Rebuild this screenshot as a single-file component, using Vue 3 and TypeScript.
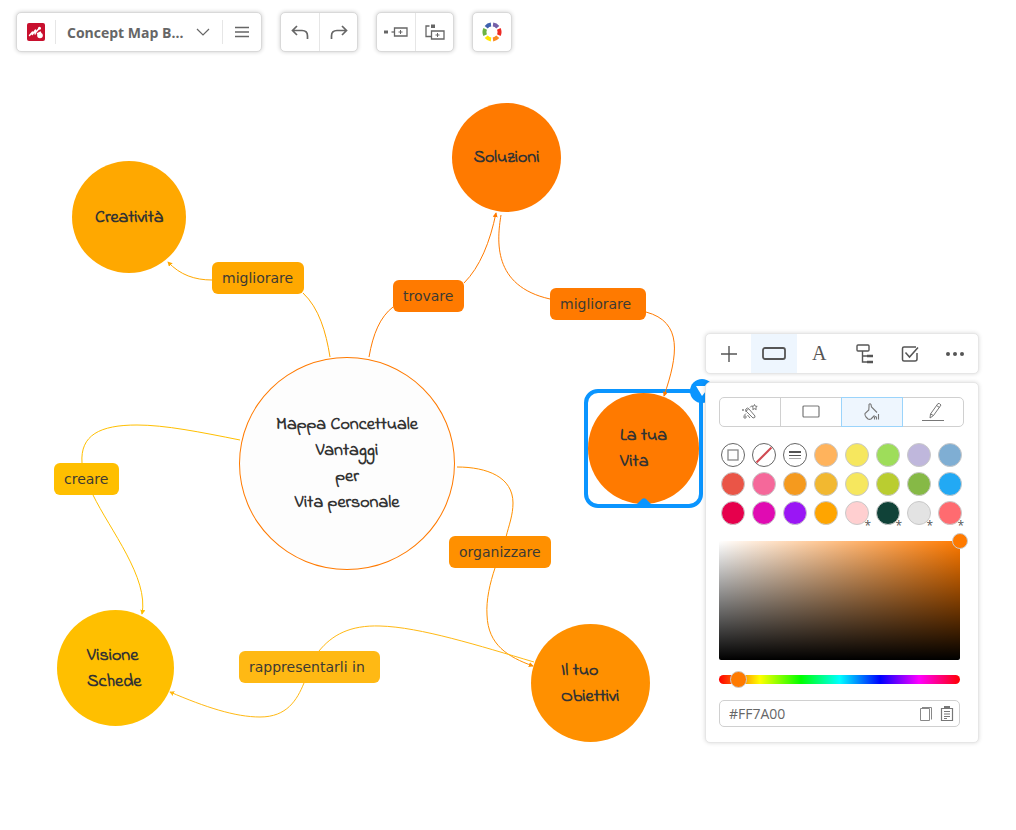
<script setup lang="ts">
import { ref } from 'vue'

interface MapNode {
  id: string
  lines: string[]
  x: number
  y: number
  w: number
  h: number
  color: string
  pad?: number
}

interface LinkLabel {
  text: string
  x: number
  y: number
  w: number
  color: string
}

interface Edge {
  d: string
  color: string
  arrow: boolean
}

const nodes: MapNode[] = [
  { id: 'soluzioni', lines: ['Soluzioni'], x: 452, y: 103, w: 109, h: 109, color: '#ff7a00' },
  { id: 'creativita', lines: ['Creatività'], x: 72, y: 161, w: 114, h: 112, color: '#ffa800' },
  { id: 'visione', lines: ['Visione', 'Schede'], x: 57, y: 610, w: 117, h: 116, color: '#ffbf00', pad: 30 },
  { id: 'obiettivi', lines: ['Il tuo', 'Obiettivi'], x: 531, y: 624, w: 119, h: 118, color: '#ff9000', pad: 30 },
  { id: 'vita', lines: ['La tua', 'Vita'], x: 588, y: 393, w: 111, h: 111, color: '#ff7a00', pad: 32 },
]

const labels: LinkLabel[] = [
  { text: 'migliorare', x: 212, y: 262, w: 92, color: '#ffa800' },
  { text: 'trovare', x: 393, y: 280, w: 71, color: '#ff7a00' },
  { text: 'migliorare', x: 550, y: 288, w: 96, color: '#ff7a00' },
  { text: 'creare', x: 54, y: 463, w: 65, color: '#ffbf00' },
  { text: 'organizzare', x: 449, y: 536, w: 102, color: '#ff9000' },
  { text: 'rappresentarli in', x: 239, y: 651, w: 141, color: '#ffb914' },
]

const edges: Edge[] = [
  { d: 'M330 357 C326 332 319 308 303 293', color: '#ffa800', arrow: false },
  { d: 'M212 280 C195 280 180 275 168 262', color: '#ffa800', arrow: true },
  { d: 'M369 357 C373 334 380 317 393 307', color: '#ff7a00', arrow: false },
  { d: 'M464 283 C480 267 490 242 496 213', color: '#ff7a00', arrow: true },
  { d: 'M501 215 C497 240 492 286 550 299', color: '#ff7a00', arrow: false },
  { d: 'M646 312 C683 322 678 355 664 396', color: '#ff7a00', arrow: true },
  { d: 'M240 440 C200 432 165 425 137 425 C100 425 80 435 82 463', color: '#ffbf00', arrow: false },
  { d: 'M93 495 C110 530 149 578 142 614', color: '#ffbf00', arrow: true },
  { d: 'M457 467 C487 467 513 477 513 503 C513 515 509 525 506 537', color: '#ff9000', arrow: false },
  { d: 'M495 568 C490 583 486 600 487 615 C488 645 508 657 533 666', color: '#ff9000', arrow: true },
  { d: 'M534 662 C480 646 420 627 380 626 C350 625 332 635 319 651', color: '#ffb914', arrow: false },
  { d: 'M304 683 C297 700 287 717 260 717 C235 717 205 707 170 692', color: '#ffb914', arrow: true },
]

interface Swatch {
  color: string
  custom?: boolean
}

const swatches: Swatch[] = [
  { color: '#ffb35c' }, { color: '#f6e75e' }, { color: '#9edd5a' }, { color: '#bfb7dc' }, { color: '#7faed3' },
  { color: '#ea5547' }, { color: '#f5689a' }, { color: '#f59a1e' }, { color: '#f2b830' },
  { color: '#f6e75e' }, { color: '#bacd30' }, { color: '#86b946' }, { color: '#22a9f4' },
  { color: '#e6004c' }, { color: '#e00bb2' }, { color: '#9a16f5' }, { color: '#ffa500' },
  { color: '#ffcfd0', custom: true }, { color: '#104238', custom: true },
  { color: '#e3e3e3', custom: true }, { color: '#ff6b70', custom: true },
]

const selected = ref('vita')
const hex = ref('#FF7A00')
const hue = ref(17)
</script>

<template>
  <main class="workspace">
    <section class="canvas" aria-label="Concept map">
      <div class="root-node">
        <span>Mappa Concettuale</span>
        <span>Vantaggi</span>
        <span>per</span>
        <span>Vita personale</span>
      </div>
      <div
        v-for="n in nodes"
        :key="n.id"
        class="node"
        :class="{ left: n.pad, selected: n.id === selected }"
        :style="{ left: n.x + 'px', top: n.y + 'px', width: n.w + 'px', height: n.h + 'px', background: n.color, paddingLeft: (n.pad ?? 0) + 'px' }"
        @click="selected = n.id"
      >
        <span v-for="line in n.lines" :key="line">{{ line }}</span>
        <template v-if="n.id === selected">
          <i class="frame"></i>
          <svg class="handle" width="24" height="24" viewBox="0 0 24 24" aria-hidden="true">
            <circle cx="12" cy="12" r="12" fill="#0a95ff" />
            <path d="M6 7h14l-8 10z" fill="#fff" />
          </svg>
          <svg class="notch" width="14" height="6" viewBox="0 0 14 6" aria-hidden="true">
            <path d="M0 6 5 1q2-1.500 4 0l5 5z" fill="#0a95ff" />
          </svg>
        </template>
      </div>
      <svg class="edges" aria-hidden="true">
        <defs>
          <marker id="tip" viewBox="0 0 6 6" refX="5" refY="3" markerWidth="5" markerHeight="5" orient="auto">
            <path d="M0 0 6 3 0 6z" fill="context-stroke" />
          </marker>
        </defs>
        <path
          v-for="e in edges"
          :key="e.d"
          :d="e.d"
          :stroke="e.color"
          fill="none"
          :marker-end="e.arrow ? 'url(#tip)' : undefined"
        />
      </svg>
      <div
        v-for="l in labels"
        :key="l.text + l.x"
        class="link-label"
        :style="{ left: l.x + 'px', top: l.y + 'px', width: l.w + 'px', background: l.color }"
      >{{ l.text }}</div>
    </section>

    <header class="topbar">
      <div class="group">
        <button class="logo" aria-label="Home">
          <svg width="18" height="18" viewBox="0 0 18 18">
            <rect width="18" height="18" rx="2" fill="#c8102e" />
            <path d="M2.500 12.500 5.500 9l-.2 2.500L8.500 7l-.4 4" fill="none" stroke="#fff" stroke-width="1.500" stroke-linecap="round" stroke-linejoin="round" />
            <path d="M8.500 9.500 12.500 5" stroke="#fff" stroke-width="1.600" stroke-linecap="round" />
            <circle cx="12.500" cy="5.200" r="1.500" fill="#fff" />
            <circle cx="13" cy="12.500" r="2.800" fill="#fff" />
            <path d="M10 11 14 9" stroke="#fff" stroke-width="1.800" />
          </svg>
        </button>
        <button class="title">
          <span>Concept Map B...</span>
          <svg width="14" height="8" viewBox="0 0 14 8" fill="none" stroke="#666" stroke-width="1.200"><path d="M1 1l6 6 6-6" /></svg>
        </button>
        <button class="menu" aria-label="Menu">
          <svg width="14" height="12" viewBox="0 0 14 12" stroke="#666" stroke-width="1.300"><path d="M0 1.500h14M0 6h14M0 10.500h14" /></svg>
        </button>
      </div>
      <div class="group">
        <button class="tool" aria-label="Undo">
          <svg width="18" height="16" viewBox="0 0 18 16" fill="none" stroke="#666" stroke-width="1.700"><path d="M6 2 1.500 6.500 6 11M1.500 6.500H11q5.500 0 5.500 5.500v3" /></svg>
        </button>
        <button class="tool" aria-label="Redo">
          <svg width="18" height="16" viewBox="0 0 18 16" fill="none" stroke="#666" stroke-width="1.700"><path d="M12 2l4.500 4.500L12 11M16.500 6.500H7q-5.500 0-5.500 5.500v3" /></svg>
        </button>
      </div>
      <div class="group">
        <button class="tool" aria-label="Add child topic">
          <svg width="24" height="16" viewBox="0 0 24 16" fill="none" stroke="#666"><path d="M0 6.500h4v3H0z" fill="#666" stroke="none" /><path d="M7.500 8h3" stroke-width="1.300" /><path d="M10.500 4h12.500v8H10.500z" stroke-width="1.300" /><path d="M16.500 6v4M14.500 8h4" /></svg>
        </button>
        <button class="tool" aria-label="Add sibling topic">
          <svg width="20" height="16" viewBox="0 0 20 16" fill="none" stroke="#666"><path d="M6 .5h4v3.500H6z" fill="#666" stroke="none" /><path d="M4.500 2H1v10.500h5" stroke-width="1.300" /><path d="M6.500 7h12.500v8H6.500z" stroke-width="1.300" /><path d="M12.500 9v4M10.500 11h4" /></svg>
        </button>
      </div>
      <div class="group">
        <button class="tool" aria-label="Theme colors">
          <svg width="20" height="20" viewBox="0 0 20 20" fill="none" stroke-width="4">
            <path d="M4.200 5.200A7.500 7.500 0 0 1 9 2.600" stroke="#3f62ae" />
            <path d="M11 2.600A7.500 7.500 0 0 1 15.800 5.200" stroke="#7560a8" />
            <path d="M16.800 6.800A7.500 7.500 0 0 1 16.800 13.200" stroke="#ed2a24" />
            <path d="M15.800 14.800A7.500 7.500 0 0 1 11 17.400" stroke="#f98b25" />
            <path d="M9 17.400A7.500 7.500 0 0 1 4.200 14.800" stroke="#ffe600" />
            <path d="M3.200 13.200A7.500 7.500 0 0 1 3.200 6.800" stroke="#6db344" />
          </svg>
        </button>
      </div>
    </header>

    <aside class="inspector" aria-label="Format">
      <div class="card actions">
        <button aria-label="Add"><svg width="16" height="16" viewBox="0 0 16 16" stroke="#555" stroke-width="1.400"><path d="M8 0v16M0 8h16" /></svg></button>
        <button class="active" aria-label="Shape"><svg width="24" height="14" viewBox="0 0 24 14" fill="none" stroke="#555" stroke-width="1.800"><rect x="1" y="1" width="22" height="11" rx="2" /></svg></button>
        <button class="letter" aria-label="Text">A</button>
        <button aria-label="Layout"><svg width="18" height="20" viewBox="0 0 18 20" fill="none" stroke="#555" stroke-width="1.400"><rect x="1" y="1" width="12" height="6" rx="1" /><path d="M6.500 7v11H11M6.500 12H11" /><path d="M11 12h6M11 18h6" stroke-width="2.600" /></svg></button>
        <button aria-label="Task"><svg width="18" height="18" viewBox="0 0 18 18" fill="none" stroke="#555" stroke-width="1.500"><path d="M16 8v6q0 2-2 2H3q-1.500 0-1.500-1.500V3.500Q1.500 2 3 2h12" /><path d="M4.500 7.500 8.500 12 17 2.500" /></svg></button>
        <button aria-label="More"><svg width="18" height="4" viewBox="0 0 18 4" fill="#555"><circle cx="2" cy="2" r="2" /><circle cx="9" cy="2" r="2" /><circle cx="16" cy="2" r="2" /></svg></button>
      </div>

      <div class="card panel">
        <div class="tabs">
          <button aria-label="Theme">
            <svg width="18" height="18" viewBox="0 0 18 18" fill="none" stroke="#777"><path d="M5 6q1.500-2 3 0l6 7q.5 2-2 2L5 8q-1-1 0-2zM4.500 8.500 7.500 6M3 12.500l2-2M9 4.500l2-2" /><path d="M13.500 1.500l.8 1.700 1.900.2-1.400 1.300.4 1.900-1.700-.9-1.700.9.4-1.900-1.400-1.300 1.900-.2z" /><circle cx="4" cy="14" r="1.200" /><circle cx="2" cy="7" r=".6" /><path d="M6.500 12l2.500 3" /></svg>
          </button>
          <button aria-label="Border shape"><svg width="18" height="14" viewBox="0 0 18 14" fill="none" stroke="#777" stroke-width="1.200"><rect x="1" y="1" width="16" height="11" rx="1" /></svg></button>
          <button class="active" aria-label="Fill">
            <svg width="18" height="18" viewBox="0 0 18 18" fill="none" stroke="#777" stroke-width="1.100"><path d="M6 4.500V1.500q1-1.500 2 0L8.500 4l5.500 5.500M6 3.500 5.800 7 2 10.500q-.5 2 1 3.500l2 2q1.500.8 3 0l3.500-3.500" /><path d="M11.500 16.500v-2q1-2 2 0v2M15.500 16.500V11" /></svg>
          </button>
          <button aria-label="Line color">
            <svg width="22" height="20" viewBox="0 0 22 20" fill="none" stroke="#777"><path d="M8.500 12 16 1.500q1.500-.5 3 1.500L11.500 13.500 8 16zM8.500 12l3 1.500M14.500 3.500l3 2" /><path d="M0 18.500h22" /></svg>
          </button>
        </div>

        <div class="swatches">
          <button class="swatch special" aria-label="Default fill"><svg width="12" height="12" viewBox="0 0 12 12" fill="none" stroke="#888" stroke-width="1.300"><rect x="1" y="1" width="10" height="10" /></svg></button>
          <button class="swatch special" aria-label="No fill"><svg width="18" height="18" viewBox="0 0 18 18" stroke="#d04a52" stroke-width="2"><path d="M1.500 16.500l15-15" /></svg></button>
          <button class="swatch special" aria-label="Inherit"><svg width="12" height="8" viewBox="0 0 12 8"><path d="M0 0h12v2H0z" fill="#555" /><path d="M0 4h12v1H0z" fill="#555" /><path d="M0 7h12v1H0z" fill="#aaa" /></svg></button>
          <button
            v-for="(s, i) in swatches"
            :key="i"
            class="swatch"
            :class="{ custom: s.custom }"
            :style="{ background: s.color }"
            :aria-label="'Color ' + s.color"
          ></button>
        </div>

        <div class="picker">
          <div class="shade"><i class="shade-knob"></i></div>
          <input v-model="hue" class="hue" type="range" min="0" max="360" aria-label="Hue" />
          <div class="hex">
            <input v-model="hex" type="text" aria-label="Hex color" />
            <button aria-label="Copy"><svg width="14" height="16" viewBox="0 0 14 16" fill="none" stroke="#888"><path d="M3 1.500h9.500v12" /><path d="M1.500 2.500h9v12h-9z" /></svg></button>
            <button aria-label="Paste"><svg width="14" height="16" viewBox="0 0 14 16" fill="none" stroke="#777"><path d="M1.500 2.500h11v12h-11z" stroke-width="1.200" /><path d="M4 0h6v3H4z" fill="#777" stroke="none" /><path d="M4 5.500h6M4 8h6M4 10.500h6M4 12.500h3" /></svg></button>
          </div>
        </div>
      </div>
    </aside>
  </main>
</template>

<style>
body {
  background: #fff;
}
</style>

<style scoped>
.workspace {
  position: relative;
  min-height: 100vh;
  overflow: hidden;
  font-family: "Open Sans", "Noto Sans", sans-serif;
  font-size: 14px;
  color: #555;
}
.workspace * {
  box-sizing: border-box;
}
button {
  display: flex;
  align-items: center;
  justify-content: center;
  margin: 0;
  padding: 0;
  border: 0;
  background: none;
  color: inherit;
  font: inherit;
  cursor: pointer;
}
svg {
  display: block;
  flex: none;
}
.topbar {
  position: relative;
  display: flex;
  gap: 18px;
  padding: 12px 16px;
}
.group {
  display: flex;
  align-items: center;
  height: 40px;
  border: 1px solid #d9d9d9;
  border-radius: 5px;
  background: #fff;
  box-shadow: 0 0 4px rgba(0, 0, 0, 0.2);
}
.group button + button {
  border-left: 1px solid #e6e6e6;
}
.logo {
  width: 38px;
  height: 24px;
}
.title {
  gap: 13px;
  height: 24px;
  padding: 0 12px 0 11px;
  font-size: 14px;
  font-weight: 700;
  color: #666;
}
.menu {
  width: 39px;
  height: 24px;
}
.tool {
  width: 38px;
  height: 38px;
}
.canvas {
  position: absolute;
  inset: 0;
}
.edges {
  position: absolute;
  inset: 0;
  width: 100%;
  height: 100%;
  pointer-events: none;
}
.root-node,
.node {
  position: absolute;
  display: flex;
  flex-direction: column;
  align-items: center;
  justify-content: center;
  padding-top: 1px;
  border-radius: 50%;
  font-family: "Indie Flower", "Open Sans", sans-serif;
  font-size: 18px;
  font-weight: 700;
  line-height: 26px;
  color: #333;
  white-space: nowrap;
}
.root-node {
  left: 239px;
  top: 357px;
  width: 216px;
  height: 213px;
  border: 1px solid #ff7a00;
  background: #fdfdfd;
}
.node.left {
  align-items: flex-start;
}
.frame {
  position: absolute;
  inset: -4px;
  border: 4px solid #0a95ff;
  border-radius: 14px;
}
.handle {
  position: absolute;
  top: -14px;
  right: -15px;
}
.notch {
  position: absolute;
  bottom: 0;
  left: 49px;
}
.link-label {
  position: absolute;
  height: 32px;
  padding-left: 10px;
  border-radius: 6px;
  font-family: "DejaVu Sans", sans-serif;
  line-height: 32px;
  color: #3d3a33;
  white-space: nowrap;
}
.inspector {
  position: absolute;
  left: 705px;
  top: 333px;
  width: 274px;
  display: flex;
  flex-direction: column;
  gap: 8px;
}
.card {
  border: 1px solid #e6e6e6;
  border-radius: 5px;
  background: #fff;
  box-shadow: 0 0 4px rgba(0, 0, 0, 0.15);
}
.actions {
  display: flex;
  height: 41px;
}
.actions button {
  flex: 1;
}
.actions .active {
  background: #eef6fe;
}
.actions .letter {
  font-family: "Liberation Serif", serif;
  font-size: 20px;
}
.panel {
  padding: 14px 14px 15px 13px;
}
.tabs {
  display: flex;
  height: 30px;
}
.tabs button {
  flex: 1;
  border: 1px solid #d0d0d0;
}
.tabs button + button {
  margin-left: -1px;
}
.tabs button:first-child {
  border-radius: 5px 0 0 5px;
}
.tabs button:last-child {
  border-radius: 0 5px 5px 0;
}
.tabs .active {
  z-index: 1;
  border-color: #9bd4fb;
  background: #eef6fe;
}
.swatches {
  display: grid;
  grid-template-columns: repeat(8, 31px);
  grid-auto-rows: 29px;
  place-items: center;
  margin: 13px 0 0 -2px;
}
.swatch {
  position: relative;
  width: 24px;
  height: 24px;
  border: 1px solid #c9c9c9;
  border-radius: 50%;
}
.swatch.special {
  border-color: #666;
}
.swatch.custom::after {
  content: "*";
  position: absolute;
  left: 19px;
  top: 16px;
  font-size: 12px;
  line-height: 16px;
  color: #555;
}
.picker {
  display: flex;
  flex-direction: column;
  margin: 14px 4px 0 0;
}
.shade {
  position: relative;
  height: 119px;
  border-radius: 2px;
  background: linear-gradient(to top, #000, transparent), linear-gradient(to right, #fff, #ff7a00);
}
.shade-knob {
  position: absolute;
  right: -8px;
  top: -8px;
  width: 16px;
  height: 16px;
  border: 1px solid #ccc;
  border-radius: 50%;
  background: #ff7a00;
}
.hue {
  appearance: none;
  width: 100%;
  height: 9px;
  margin: 15px 0 16px;
  border-radius: 5px;
  background: linear-gradient(to right, #f00, #ff0 17%, #0f0 34%, #0ff 50%, #00f 67%, #f0f 83%, #f00);
}
.hue::-webkit-slider-thumb {
  appearance: none;
  width: 17px;
  height: 17px;
  border: 1px solid #ccc;
  border-radius: 50%;
  background: #ff7a00;
}
.hex {
  display: flex;
  align-items: center;
  gap: 7px;
  height: 27px;
  padding: 0 5px 0 9px;
  border: 1px solid #d0d0d0;
  border-radius: 5px;
}
.hex input {
  flex: 1;
  min-width: 0;
  padding: 0;
  border: 0;
  outline: 0;
  background: none;
  color: #666;
  font: inherit;
}
</style>
